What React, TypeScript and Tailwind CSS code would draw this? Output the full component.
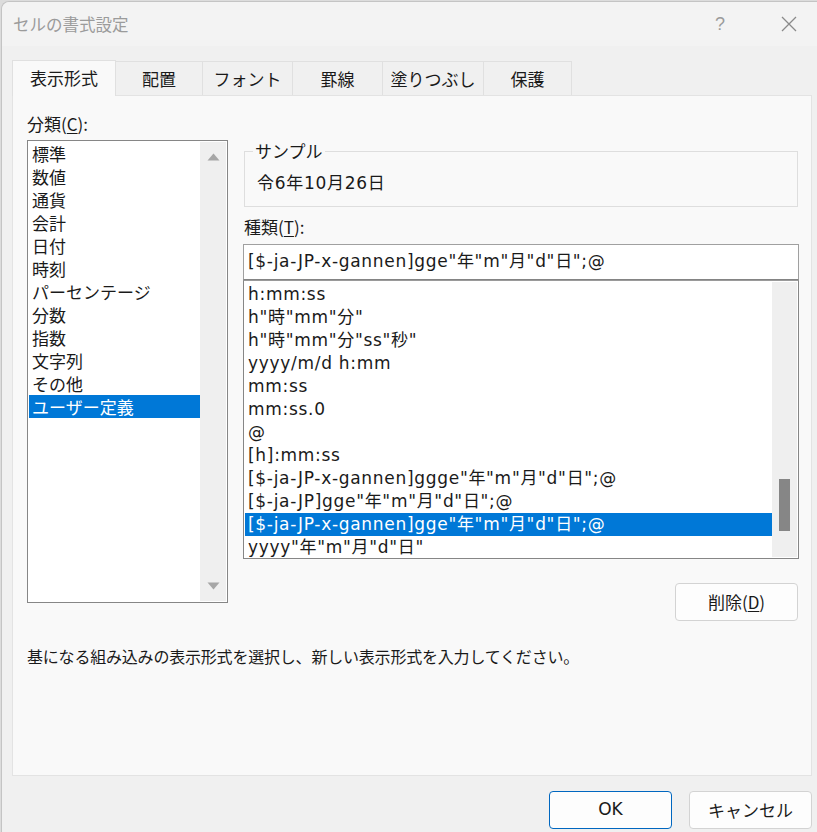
import React from "react";

const categories = [
  "標準",
  "数値",
  "通貨",
  "会計",
  "日付",
  "時刻",
  "パーセンテージ",
  "分数",
  "指数",
  "文字列",
  "その他",
  "ユーザー定義",
];

const formats = [
  'h:mm:ss',
  'h"時"mm"分"',
  'h"時"mm"分"ss"秒"',
  'yyyy/m/d h:mm',
  'mm:ss',
  'mm:ss.0',
  '@',
  '[h]:mm:ss',
  '[$-ja-JP-x-gannen]ggge"年"m"月"d"日";@',
  '[$-ja-JP]gge"年"m"月"d"日";@',
  '[$-ja-JP-x-gannen]gge"年"m"月"d"日";@',
  'yyyy"年"m"月"d"日"',
];

const tabs = ["表示形式", "配置", "フォント", "罫線", "塗りつぶし", "保護"];
const tabWidths = [104, 87, 90, 90, 101, 88];

function UpArrow() {
  return (
    <svg width="13" height="8" viewBox="0 0 13 8">
      <path d="M6.5 0.5 L12.5 7.5 L0.5 7.5 Z" fill="#a6a6a6" />
    </svg>
  );
}
function DownArrow() {
  return (
    <svg width="13" height="8" viewBox="0 0 13 8">
      <path d="M0.5 0.5 L12.5 0.5 L6.5 7.5 Z" fill="#a6a6a6" />
    </svg>
  );
}

export default function App() {
  return (
    <div className="w-[817px] h-[832px] bg-[#dcdcdc] overflow-hidden font-['Noto_Sans_CJK_JP',sans-serif] text-[#1a1a1a] pl-[1px] pt-[1px]">
      <div className="w-[816px] h-[831px] bg-[#f0f0f0] border-l border-t border-[#c4c4c4] rounded-tl-[8px] flex flex-col">
        {/* title bar */}
        <div className="h-[44px] bg-[#f3f3f3] rounded-tl-[8px] flex items-center pl-[11px] shrink-0">
          <span className="text-[16.5px] text-[#9b9b9b] leading-none">セルの書式設定</span>
          <div className="ml-auto flex items-center">
            <span className="text-[18px] text-[#9b9b9b] font-['Liberation_Sans',sans-serif] w-[20px] text-center mr-[50px]">?</span>
            <svg width="18" height="18" viewBox="0 0 18 18" className="mr-[19px]">
              <path d="M2 2 L16 16 M16 2 L2 16" stroke="#8a8a8a" strokeWidth="1.3" />
            </svg>
          </div>
        </div>

        {/* tabs */}
        <div className="flex pl-[10px] mt-[13px] h-[36px] items-end shrink-0">
          {tabs.map((t, i) => (
            <div
              key={t}
              style={{ width: tabWidths[i] }}
              className={
                i === 0
                  ? "h-[36px] bg-[#f9f9f9] border-l border-t border-r border-[#e0e0e0] flex items-center justify-center text-[17px] relative z-10 -mb-[1px] pb-[1px]"
                  : "h-[34px] bg-[#f0f0f0] border-t border-r border-[#e0e0e0] flex items-center justify-center text-[17px]"
              }
            >
              {t}
            </div>
          ))}
        </div>

        {/* panel */}
        <div className="ml-[10px] w-[800px] h-[681px] bg-[#f9f9f9] border border-[#e3e3e3] pl-[14px] pr-[12px] pt-[16px] shrink-0">
          <div className="flex gap-[15px]">
            {/* left column */}
            <div className="w-[201px] flex flex-col">
              <div className="h-[23px] leading-[23px] text-[17px]">
                分類(<span className="underline underline-offset-2">C</span>):
              </div>
              <div className="mt-[5px] h-[463px] border border-[#868686] bg-white flex">
                <div className="flex-1 pt-[1px] pl-[1px]">
                  {categories.map((c, i) => (
                    <div
                      key={c}
                      className={
                        i === categories.length - 1
                          ? "h-[23px] leading-[23px] text-[17px] pl-[3px] bg-[#0078d7] text-white"
                          : "h-[23px] leading-[23px] text-[17px] pl-[3px]"
                      }
                    >
                      {c}
                    </div>
                  ))}
                </div>
                <div className="w-[26px] bg-[#efefef] my-[1px] mr-[1px] flex flex-col items-center justify-between py-[11px]">
                  <UpArrow />
                  <DownArrow />
                </div>
              </div>
            </div>

            {/* right column */}
            <div className="flex-1 flex flex-col pt-[39px] font-['DejaVu_Sans','Noto_Sans_CJK_JP',sans-serif]">
              <div className="relative h-[56px] border border-[#dedede] ml-[1px] mr-[1px]">
                <span className="absolute -top-[13px] left-[8px] px-[2px] bg-[#f9f9f9] text-[17px] leading-[23px] font-['Noto_Sans_CJK_JP',sans-serif]">サンプル</span>
                <div className="pl-[12px] pt-[20px] text-[17px] leading-[23px] tracking-[0.7px]">令6年10月26日</div>
              </div>
              <div className="mt-[8px] h-[23px] leading-[23px] text-[17px] pl-[1px] font-['Noto_Sans_CJK_JP',sans-serif]">
                種類(<span className="underline underline-offset-2">T</span>):
              </div>
              <div className="mt-[6px] h-[36px] border border-[#a0a0a0] border-b-[#848484] bg-white flex items-center pl-[4px] text-[17px] tracking-[0.7px] whitespace-nowrap">
                [$-ja-JP-x-gannen]gge"年"m"月"d"日";@
              </div>
              <div className="h-[279px] border border-[#868686] border-t-[#9a9a9a] bg-white flex">
                <div className="flex-1 pt-[2px] pl-[1px] overflow-hidden">
                  {formats.map((f, i) => (
                    <div
                      key={i}
                      className={
                        i === 10
                          ? "h-[23px] leading-[23px] text-[17px] tracking-[0.7px] pl-[3px] bg-[#0078d7] text-white whitespace-nowrap"
                          : "h-[23px] leading-[23px] text-[17px] tracking-[0.7px] pl-[3px] whitespace-nowrap"
                      }
                    >
                      {f}
                    </div>
                  ))}
                </div>
                <div className="w-[25px] bg-[#efefef] my-[1px] mr-[1px] flex flex-col items-center pt-[197px]">
                  <div className="w-[11px] h-[52px] bg-[#868686]" />
                </div>
              </div>
              <div className="flex justify-end mt-[24px]">
                <button className="w-[123px] h-[38px] bg-[#fdfdfd] border border-[#d3d3d3] rounded-[4px] text-[17px] mr-[1px] font-['Noto_Sans_CJK_JP',sans-serif]">
                  削除(<span className="underline underline-offset-2">D</span>)
                </button>
              </div>
            </div>
          </div>
          <div className="mt-[24px] text-[16px] leading-[23px] tracking-[-0.2px]">
            基になる組み込みの表示形式を選択し、新しい表示形式を入力してください。
          </div>
        </div>

        {/* bottom buttons */}
        <div className="flex justify-end gap-[17px] mt-[15px] pr-[5px]">
          <button className="w-[123px] h-[38px] bg-[#fdfdfd] border border-[#0067c0] rounded-[4px] text-[17px] font-['DejaVu_Sans',sans-serif]">
            OK
          </button>
          <button className="w-[123px] h-[38px] bg-[#fdfdfd] border border-[#d3d3d3] rounded-[4px] text-[17px]">
            キャンセル
          </button>
        </div>
      </div>
    </div>
  );
}
